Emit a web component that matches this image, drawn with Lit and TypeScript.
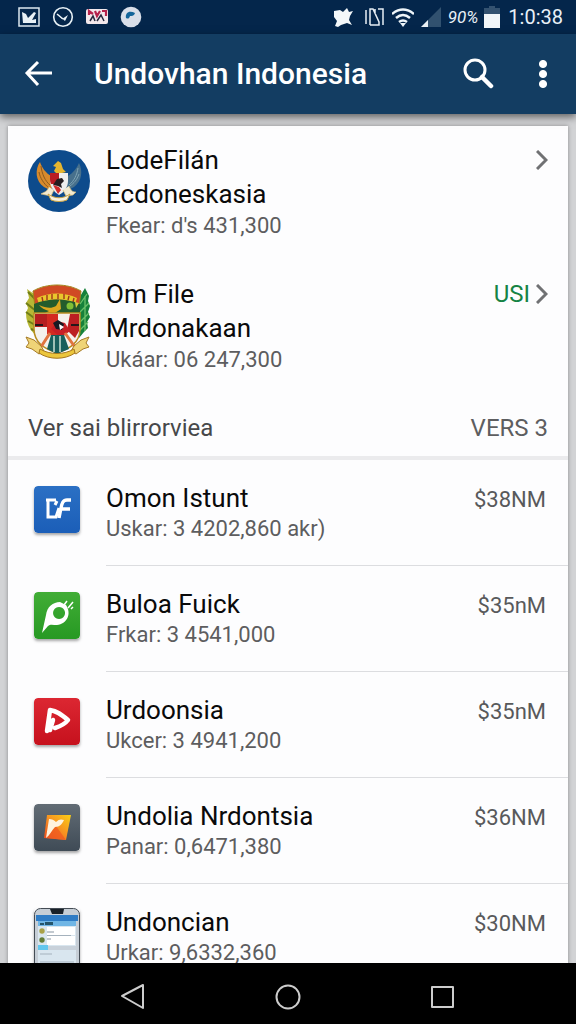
import { LitElement, html, svg, css } from "lit";
import { customElement, property } from "lit/decorators.js";

const garuda = svg`<svg class="emblem" viewBox="0 0 66 84" aria-hidden="true">
  <circle cx="35" cy="38" r="31" fill="#0d4b8c"/>
  <path d="M16 19c-5 7-5 19 4 25l8 4-1-15c-5-3-9-8-11-14z" fill="#d88a2c"/>
  <path d="M17 23c1 8 4 15 9 19M15 29c1 6 5 12 10 16" stroke="#8b5a1f" fill="none"/>
  <path d="M55 20c4 8 3 18-5 24l-8 4 2-15c5-3 9-8 11-13z" fill="#47708c"/>
  <path d="M54 25c-1 7-4 13-9 17M55 31c-2 6-5 9-9 12" stroke="#7fa3b3" fill="none"/>
  <path d="M30 28l2-4-3-1 5-5 3 2 2 6 3 3-4 1h-6z" fill="#e5b52f"/>
  <path d="M26 30h18v8c0 7-5 12-9 14-5-3-9-8-9-14z" fill="#eee"/>
  <path d="M26 30h9v11h-8c-1-2-1-4-1-6z" fill="#b81c24"/>
  <path d="M29 42l4-6 5-1 2 3-3 3 1 4-4-2z" fill="#251d20"/>
  <path d="M29 42l6 2 2 3-3 4z" fill="#d02c2b"/>
  <path d="M25 44c-2 5-5 5-8 7l5 1 5 1 3-6M45 43c2 5 4 6 7 6l-3 3-7 1-3-6" fill="#f3ead0" stroke="#d7bb79" stroke-width=".7"/>
  <path d="M24 51c7 5 15 5 22 0l-3 6c-5 2-11 2-16 0z" fill="#f6f1df" stroke="#c9a142"/>
</svg>`;

const shield = svg`<svg class="emblem" viewBox="-1 -8 66 84" aria-hidden="true">
  <path d="M2 4l7 5 3 3v27l6 14C8 51 1 41 1 28l2-5-2-5 3-5z" fill="#b6b735"/>
  <path d="M3 7l8 8M1 18l10 8M1 27l11 8M3 36l9 5M6 44l10 4" stroke="#6f7c18" stroke-width="2"/>
  <path d="M60 3l4 8-1 5 2 5-2 6 2 5-3 5 1 6-4 4-5 6-5-3 4-16V15z" fill="#16813b"/>
  <path d="M62 9l-7 10M64 18l-9 9M64 28l-9 9M63 37l-9 9M60 11v35" stroke="#6ac06a" stroke-width="1.3"/>
  <path d="M8 6c14-8 34-8 48 0l-2 16H10z" fill="#d04a24" stroke="#a18418"/>
  <path d="M12 13c12-6 28-6 40 0l-2 6c-12-6-25-6-36 0z" fill="#e9c62c"/>
  <path d="M17 12l1 5m4-7v5m5-6v5m6-5v5m6-5v5m5-3l-1 4m6-2l-1 4" stroke="#9f351b" stroke-width="1.4"/>
  <path d="M9 19c13-6 33-6 46 0v10H9z" fill="#235c2c"/>
  <path d="M14 20c7 3 12 4 17 1l4-7 1 10-6 4H20l4-2c-4-1-8-3-10-6z" fill="#dca71f"/>
  <circle cx="45" cy="21" r="3.5" fill="#80bf36"/><path d="M50 17l4 1-3 5z" fill="#dbcd3b"/>
  <path d="M9 28h46v16c0 15-12 20-23 24C20 64 9 58 9 44z" fill="#f4f1ec" stroke="#b88d20" stroke-width="1.500"/>
  <path d="M10 29h12v13H10z" fill="#b51f20"/>
  <path d="M22 29h11v24l-11-4z" fill="#d42a22"/>
  <path d="M45 29h9v17l-4 7-8-8z" fill="#bc1f22"/>
  <path d="M10 40h8m28 0h8" stroke="#24171a" stroke-width="2"/>
  <path d="M26 44l6-8 8 2 5 8-9 7z" fill="#c81f26"/>
  <path d="M28 38l5-3 6 4-2 6-6-1z" fill="#171923"/>
  <path d="M34 39l5 3-4 3z" fill="#fff"/>
  <path d="M22 64l4-14h13l5 14-12 5z" fill="#195f5c"/>
  <path d="M29 51v16m6-16v16" stroke="#cce1d2" stroke-width="1.500"/>
  <path d="M25 48L14 65M40 48l12 17" stroke="#e0743f" stroke-width="3"/>
  <path d="M1 52l8 3 7 6 3 5-5 3-7-5-6-2 3-4zM64 52l-8 3-7 6-3 5 5 3 7-5 6-2-3-4z" fill="#efd477" stroke="#a67a26"/>
  <path d="M15 64c10 6 24 6 34 0l1 4c-10 7-26 7-36 0z" fill="#ecc63c" stroke="#a6771d"/>
</svg>`;

const blueIcon = svg`<svg class="tile" viewBox="0 0 46 47" aria-hidden="true">
  <defs><linearGradient id="b" x2="0" y2="1"><stop stop-color="#2b70c4"/><stop offset="1" stop-color="#1b5eb8"/></linearGradient></defs>
  <rect width="46" height="47" rx="4" fill="url(#b)"/>
  <path d="M12 14h10M14 14v17h8l3-9M23 15l-2 4" fill="none" stroke="#fff" stroke-width="3"/>
  <path d="M37 14h-4c-4 0-5 3-6 8l-2 10M27 23h9" fill="none" stroke="#fff" stroke-width="3.4"/>
</svg>`;

const greenIcon = svg`<svg class="tile" viewBox="0 0 46 47" aria-hidden="true">
  <defs><linearGradient id="g" x2="0" y2="1"><stop stop-color="#41ad36"/><stop offset="1" stop-color="#279923"/></linearGradient></defs>
  <rect width="46" height="47" rx="4" fill="url(#g)"/>
  <path fill-rule="evenodd" d="M8 41l4-18c1-8 7-13 14-13l6 3c6 9 1 19-9 20-4 0-7-1-9 1zM25 15a6 6 0 1 0 .1 0z" fill="#fff"/>
  <path d="M30 13l3-4M34 16l5-6M37 17l2-2" stroke="#fff" stroke-width="1.500"/>
</svg>`;

const redIcon = svg`<svg class="tile" viewBox="0 0 46 47" aria-hidden="true">
  <defs><linearGradient id="r" x2="0" y2="1"><stop stop-color="#dc2732"/><stop offset="1" stop-color="#c6111d"/></linearGradient></defs>
  <rect width="46" height="47" rx="4" fill="url(#r)"/>
  <path d="M16 12l-3 21M16 12c7 1 12 5 18 10-3 4-7 6-13 8M16 32l3-10" fill="none" stroke="#fff" stroke-width="4.500" stroke-linejoin="round" stroke-linecap="round"/>
</svg>`;

const greyIcon = svg`<svg class="tile" viewBox="0 0 46 47" aria-hidden="true">
  <defs>
    <linearGradient id="k" x2="0" y2="1"><stop stop-color="#626c75"/><stop offset="1" stop-color="#3f4b56"/></linearGradient>
    <linearGradient id="o" x1="1" x2="0" y2="1"><stop stop-color="#f9cf17"/><stop offset=".5" stop-color="#f79021"/><stop offset="1" stop-color="#e9481f"/></linearGradient>
  </defs>
  <rect width="46" height="47" rx="4" fill="url(#k)"/>
  <path d="M13 11l24 0-5 25-22-2z" fill="url(#o)"/>
  <path d="M22 22l10 14-20-2z" fill="#ef5a20" opacity=".75"/>
  <path d="M15 15c3 0 5 1 7 3 3-3 5-3 8-2-2 4-4 7-9 7-3 3-5 8-9 11z" fill="#fff3dd"/>
</svg>`;

const phoneIcon = svg`<svg class="tile phone" viewBox="0 0 46 80" aria-hidden="true">
  <rect x=".5" y=".5" width="45" height="79" rx="6" fill="#c6ced6" stroke="#444c55"/>
  <path d="M2 7h42v6H2z" fill="#2f7cc5"/><path d="M16 1h14l-1 5H18z" fill="#182028"/>
  <path d="M4 13h38v65H4z" fill="#d9e6ef"/><path d="M4 13h38v5H4z" fill="#70b6e5"/>
  <path d="M6 15h4v2H6zm5-1h8v3h-8z" fill="#24556b"/>
  <path d="M13 19h28v8H13zm0 9h28v9H13z" fill="#fff"/>
  <circle cx="8" cy="23" r="2.700" fill="#a9a249"/><circle cx="8" cy="32" r="2.700" fill="#637d39"/>
  <path d="M13 24h7M13 31h4" stroke="#8795a1"/><path d="M13 27.500h24M6 46h12m-12 8h34" stroke="#a5b2bd"/>
  <path d="M4 37h10v5H4z" fill="#62c7ee"/><path d="M14 38h28v4H14z" fill="#c8d1da"/>
</svg>`;

interface Account { icon: unknown; lines: string[]; detail: string; amount: string }

const featured: Account[] = [
  { icon: garuda, lines: ["LodeFilán", "Ecdoneskasia"], detail: "Fkear: d's 431,300", amount: "" },
  { icon: shield, lines: ["Om File", "Mrdonakaan"], detail: "Ukáar: 06 247,300", amount: "USI" },
];

const accounts: Account[] = [
  { icon: blueIcon, lines: ["Omon Istunt"], detail: "Uskar: 3 4202,860 akr)", amount: "$38NM" },
  { icon: greenIcon, lines: ["Buloa Fuick"], detail: "Frkar: 3 4541,000", amount: "$35nM" },
  { icon: redIcon, lines: ["Urdoonsia"], detail: "Ukcer: 3 4941,200", amount: "$35nM" },
  { icon: greyIcon, lines: ["Undolia Nrdontsia"], detail: "Panar: 0,6471,380", amount: "$36NM" },
  { icon: phoneIcon, lines: ["Undoncian"], detail: "Urkar: 9,6332,360", amount: "$30NM" },
];

@customElement("status-bar")
class StatusBar extends LitElement {
  static styles = css`
    :host { display: flex; align-items: center; justify-content: space-between; height: 34px; flex: none; padding: 0 13px 0 18px; background: #04264b; color: #e8f0f7; font-size: 20px; }
    .group { display: flex; align-items: center; }
    .left { gap: 12px; }
    .right { gap: 6px; }
    svg { display: block; width: 22px; height: 22px; }
    .wide { margin-left: 4px; }
    .battery { width: 16px; }
    .percent { font-size: 17px; font-style: italic; }
    .time { margin-left: 2px; }
  `;
  render() {
    return html`
      <div class="group left">
        <svg viewBox="0 0 22 22"><path d="M1 2h20v18H1z" fill="none" stroke="#dce8f0" stroke-width="1.500"/><path d="M4 6l4 2 2 4 6-6 2 1-4 7 4-1v4H5z" fill="#e8f1f6"/></svg>
        <svg viewBox="0 0 22 22"><circle cx="11" cy="11" r="9.300" fill="none" stroke="#e8f1f6" stroke-width="1.600"/><path d="M5 8l5 5 6-4-3 6z" fill="#e8f1f6"/><path d="M5 8l6 5" stroke="#e8f1f6" stroke-width="1.600"/></svg>
        <svg viewBox="0 0 22 22"><rect y="3" width="22" height="15" rx="2" fill="#f3e9ed"/><path d="M3 9V5l4 3M9 5l2 5 3-5M16 5h4v5" fill="none" stroke="#b5224c" stroke-width="2.200"/><path d="M4 15l3-5 2 5M11 15l4-6 3 6" fill="none" stroke="#25283d" stroke-width="1.500"/></svg>
        <svg viewBox="0 0 22 22"><circle cx="11" cy="11" r="10.300" fill="#dadfe9"/><path d="M6 12c-1-5 3-8 9-5-1 3-3 3-5 3-1 3-2 3-4 2z" fill="#14659a"/></svg>
      </div>
      <div class="group right">
        <svg viewBox="0 0 22 22"><path d="M2 5l6-1 3 2 4-4 2 4 4-1-3 5-1 4 3 5-5-2-6 2-3 2-3-1 2-5-3-4z" fill="#f4f8fa"/></svg>
        <svg class="wide" viewBox="0 0 22 22"><path d="M2 4v14M6 19V3h3l6 13v3H6M14 3h5v16M11 3v5" fill="none" stroke="#e6eef5" stroke-width="1.500"/></svg>
        <svg viewBox="0 0 22 22"><path d="M0 8q11-9 22 0M4 12q7-6 14 0M7 16q4-3 8 0" fill="none" stroke="#eef5f9" stroke-width="2.500"/><path d="M8 17h6l-3 4z" fill="#eef5f9"/></svg>
        <svg viewBox="0 0 22 22"><path d="M21 1v20H1z" fill="#31516f"/><path d="M8 14v7H1z" fill="#e9f1f6"/></svg>
        <span class="percent">90%</span>
        <svg class="battery" viewBox="0 0 16 22"><path d="M5 0h6v2h5v7H0V2h5z" fill="#345270"/><path d="M0 8h16v14H0z" fill="#f2f6f9"/></svg>
        <span class="time">1:0:38</span>
      </div>`;
  }
}

@customElement("app-bar")
class AppBar extends LitElement {
  static styles = css`
    :host { display: flex; align-items: center; height: 80px; flex: none; z-index: 1; padding: 0 8px 0 14px; background: #133d62; color: #fff; box-shadow: 0 3px 8px rgba(0, 0, 0, .55); }
    h1 { flex: 1; margin: 0 0 0 30px; font-size: 30px; line-height: 40px; font-weight: 500; white-space: nowrap; }
    button { display: grid; place-items: center; width: 50px; height: 50px; padding: 0; border: 0; background: none; color: inherit; }
    .search { margin-right: 15px; }
    svg { display: block; width: 32px; height: 32px; fill: none; stroke: currentColor; }
  `;
  render() {
    return html`
      <button aria-label="Back"><svg viewBox="0 0 32 32" stroke-width="3"><path d="M15 4L4 15l11 12M4 15h25"/></svg></button>
      <h1>Undovhan Indonesia</h1>
      <button class="search" aria-label="Search"><svg viewBox="0 0 32 32"><circle cx="13" cy="12" r="10" stroke-width="3"/><path d="M20 19l9 9" stroke-width="4.500" stroke-linecap="round"/></svg></button>
      <button aria-label="More options"><svg viewBox="0 0 32 32" stroke="none"><g fill="#fff"><circle cx="16" cy="6" r="3.600"/><circle cx="16" cy="16" r="3.600"/><circle cx="16" cy="26" r="3.600"/></g></svg></button>`;
  }
}

@customElement("account-row")
class AccountRow extends LitElement {
  @property({ attribute: false }) account!: Account;
  @property({ type: Boolean, reflect: true }) featured = false;
  static styles = css`
    :host { display: block; }
    .row { display: flex; align-items: flex-start; padding-left: 26px; color: #0a0a0a; text-decoration: none; }
    .body { flex: 1; display: flex; justify-content: space-between; min-width: 0; margin-left: 26px; padding: 22px 22px 21px 0; border-bottom: 1px solid #dcdde0; }
    .name { font-size: 26px; line-height: 32px; }
    .name span { display: block; }
    .detail { font-size: 22px; line-height: 30px; color: #5d5d5f; }
    .amount { display: flex; align-items: center; gap: 6px; height: 34px; font-size: 22px; color: #58595b; }
    .tile { display: block; flex: none; width: 46px; height: 47px; margin-top: 26px; border-radius: 4px; box-shadow: 0 2px 3px rgba(0, 0, 0, .35); }
    .phone { height: 80px; margin-top: 24px; margin-bottom: -20px; }
    .emblem { display: block; flex: none; width: 66px; height: 84px; margin-top: 17px; }
    .chevron { width: 12px; height: 20px; fill: none; stroke: #707173; stroke-width: 3; }
    :host([featured]) .row { padding-left: 16px; }
    :host([featured]) .body { margin-left: 16px; padding: 17px 20px 19px 0; border: 0; }
    :host([featured]) .name { line-height: 34px; }
    :host([featured]) .amount { font-size: 24px; color: #168344; }
  `;
  render() {
    const a = this.account;
    return html`<a class="row" href="#">
      ${a.icon}
      <div class="body">
        <div>
          <div class="name">${a.lines.map((l) => html`<span>${l}</span>`)}</div>
          <div class="detail">${a.detail}</div>
        </div>
        <div class="amount">${a.amount}
          ${this.featured ? html`<svg class="chevron" viewBox="0 0 12 20"><path d="M1 1l9 9-9 9"/></svg>` : null}
        </div>
      </div>
    </a>`;
  }
}

@customElement("nav-bar")
class NavBar extends LitElement {
  static styles = css`
    :host { display: flex; align-items: center; justify-content: center; gap: 106px; height: 61px; flex: none; z-index: 1; padding-top: 6px; box-sizing: border-box; background: #000; }
    button { width: 48px; height: 48px; padding: 10px; border: 0; background: none; }
    svg { display: block; width: 28px; height: 28px; fill: none; stroke: #ccc; stroke-width: 2; stroke-linejoin: round; }
  `;
  render() {
    return html`
      <button aria-label="Back"><svg viewBox="0 0 28 28"><path d="M23 2v23L2 13z"/></svg></button>
      <button aria-label="Home"><svg viewBox="0 0 28 28"><circle cx="14" cy="14" r="11.500"/></svg></button>
      <button aria-label="Recent apps"><svg viewBox="0 0 28 28"><path d="M4 4h21v20H4z"/></svg></button>`;
  }
}

@customElement("app-root")
class AppRoot extends LitElement {
  static styles = css`
    :host { display: flex; flex-direction: column; height: 100vh; background: #d2d3d5; font-family: Roboto, sans-serif; }
    main { flex: 1; min-height: 0; overflow: hidden; padding: 12px 8px 0; }
    .card { background: #fdfdfe; box-shadow: 0 0 4px rgba(0, 0, 0, .35); }
    .section { display: flex; justify-content: space-between; align-items: center; box-sizing: border-box; height: 66px; padding: 6px 20px 0; border-bottom: 4px solid #ebebed; color: #47484a; font-size: 24px; }
    h2 { margin: 0; font-size: 24px; font-weight: 400; }
    .version { color: #5d5e60; }
  `;
  render() {
    return html`
      <status-bar></status-bar>
      <app-bar></app-bar>
      <main>
        <div class="card">
          ${featured.map((a) => html`<account-row featured .account=${a}></account-row>`)}
          <div class="section"><h2>Ver sai blirrorviea</h2><span class="version">VERS 3</span></div>
          ${accounts.map((a) => html`<account-row .account=${a}></account-row>`)}
        </div>
      </main>
      <nav-bar></nav-bar>`;
  }
}
